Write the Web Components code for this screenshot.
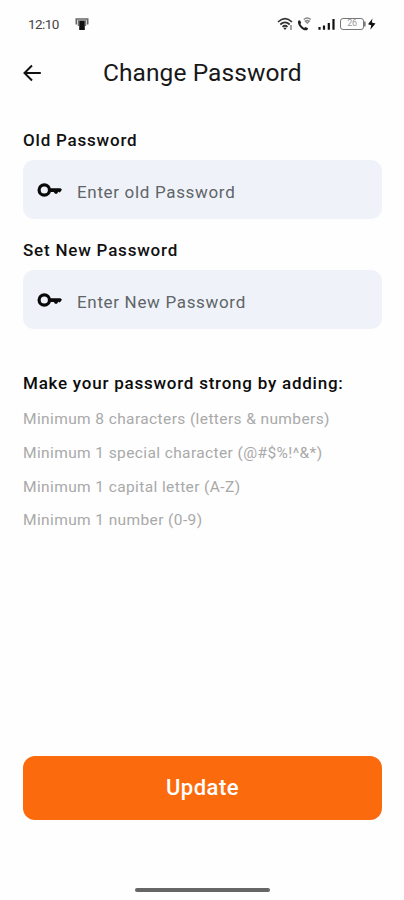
<!DOCTYPE html>
<html lang="en"><head><meta charset="utf-8"><title>Change Password</title>
<style>
body{margin:0;background:#fefefe;font-family:Roboto,"Liberation Sans",sans-serif;color:#111}
</style></head><body>
<password-screen></password-screen>
<script>
const define=(name,html)=>customElements.define(name,class extends HTMLElement{
  constructor(){super();this.attachShadow({mode:'open'}).innerHTML=html;}
});

define('status-bar',`<style>
:host{display:flex;height:48px;box-sizing:border-box;padding:0 28px 0 28px;align-items:center;color:#222}
time{font-size:13.500px;line-height:16px;width:47px;letter-spacing:-.6px;color:#444}
svg{display:block;flex:none}
.gap{flex:1}
.battery{box-sizing:border-box;width:24px;height:12px;border:1.5px solid #777;border-radius:3px;font-size:9px;line-height:9px;text-align:center;color:#999;letter-spacing:-.2px}
</style>
<time>12:10</time>
<svg width="14" height="14" viewBox="0 0 14 14"><path d="M1.300 7.500V2h11.400v5.500" fill="none" stroke="#666" stroke-width="1.600"/><path d="M4.200 3.500h5.600v9.500h-5.600z" fill="#111"/><path d="M3.400 3v6M10.600 3v6" stroke="#777" stroke-width="1.300"/></svg>
<span class="gap"></span>
<svg width="17" height="14" viewBox="0 0 17 14"><g fill="none" stroke="#333" stroke-width="1.700"><path d="M1 5Q8-1.800 15 5M3.300 7.500Q8 3.200 12.700 7.500M5.500 9.800Q8 7.700 10.500 9.800"/></g><path d="M6.300 10.700h3.400L8 13z" fill="#222"/><path d="M14 8v5" stroke="#999" stroke-width="1.800"/></svg>
<svg style="margin-left:4px" width="14" height="14" viewBox="0 0 14 14"><path d="M.3 3.800 2 3.300l1.200 2.500-.8 1.200q1.300 2.600 3.700 3.900l1.300-1 2.800 1.300-.8 1.600q-1 1-3.800.1Q.8 10.300 0 6q-.2-1.500.3-2.200z" fill="#222"/><path d="M5.800 2.500Q9.300-.6 12.800 2.500M7.300 4Q9.300 2.700 11.300 4L9.300 6z" fill="none" stroke="#888" stroke-width="1.300"/></svg>
<svg style="margin:0 5px 0 6px" width="17" height="14" viewBox="0 0 17 14"><path d="M1.500 12.800V10M6 12.800V8.500M10.800 12.800V6M15.500 12.800V2" stroke="#111" stroke-width="2.200"/></svg>
<span class="battery">26</span>
<svg width="12" height="14" viewBox="0 0 12 14"><path d="M.8 4.500v5" stroke="#777" stroke-width="1.600"/><path d="M8.500 1.500 4 7.300l3.200 1-.9 4.500L11.500 6.500 7.800 5.600z" fill="#111"/></svg>`);

define('title-bar',`<style>
:host{display:flex;height:50px;align-items:center;padding:0 23px;color:#181818}
svg{flex:none}
h1{margin:0 0 0 61px;font-size:24.500px;line-height:30px;font-weight:400;letter-spacing:.08px;white-space:nowrap}
</style>
<svg width="19" height="18" viewBox="0 0 19 18"><path d="M17.800 9H1.800M9 1.500 1.500 9 9 16.500" fill="none" stroke="#111" stroke-width="2"/></svg>
<h1><slot></slot></h1>`);

define('key-icon',`<style>:host{display:block;width:26px;height:16px;flex:none}svg{display:block}</style>
<svg width="26" height="16" viewBox="0 0 26 16"><circle cx="7.300" cy="8" r="5.200" fill="none" stroke="#0a0a0a" stroke-width="3.200"/><path d="M12.200 6.200H23.500L25 7.700 22.800 10.600 21.300 9.700 20 11.800H18L16.800 10H12.200z" fill="#0a0a0a"/></svg>`);

customElements.define('password-field',class extends HTMLElement{
  constructor(){super();this.attachShadow({mode:'open'}).innerHTML=`<style>
:host{display:block;height:110px}
label{display:block;height:30px;line-height:20px;font-size:17px;font-weight:500;letter-spacing:.79px;color:#111}
.box{box-sizing:border-box;height:59px;border-radius:11px;background:#eff3f9;display:flex;align-items:center;padding:0 14px}
.hint{margin:5px 0 0 14px;font-size:17px;line-height:22px;letter-spacing:.67px;color:#606468;white-space:nowrap}
</style><label><slot></slot></label><div class="box"><key-icon></key-icon><span class="hint"></span></div>`;}
  connectedCallback(){this.shadowRoot.querySelector('.hint').textContent=this.getAttribute('hint');}
});

define('rule-list',`<style>
:host{display:block}
h2{margin:0 0 9px;font-size:17px;line-height:24px;font-weight:500;letter-spacing:.76px;color:#0c0c0c;white-space:nowrap}
::slotted(p){margin:0;height:33.800px;line-height:30px;font-size:15.500px;letter-spacing:.39px;color:#a9a9a9;white-space:nowrap}
</style><h2><slot name="title"></slot></h2><slot></slot>`);

define('primary-button',`<style>
:host{display:block}
button{display:block;width:100%;height:64px;padding:0;border:0;border-radius:12px;background:#fb6a0c;color:#fff;font:500 22px/64px Roboto,sans-serif;letter-spacing:.5px}
</style><button><slot></slot></button>`);

define('password-screen',`<style>
:host{display:flex;flex-direction:column;width:404px;height:900px;overflow:hidden}
main{flex:1;display:flex;flex-direction:column;padding:32px 22px 0 23px}
rule-list{margin-top:21px}
primary-button{margin-top:auto;margin-bottom:68px}
.home{width:135px;height:4px;border-radius:2px;background:#666;margin:0 0 8px 135px}
</style>
<status-bar></status-bar><title-bar>Change Password</title-bar>
<main>
<password-field hint="Enter old Password">Old Password</password-field>
<password-field hint="Enter New Password">Set New Password</password-field>
<rule-list><span slot="title">Make your password strong by adding:</span>
<p>Minimum 8 characters (letters &amp; numbers)</p><p>Minimum 1 special character (@#$%!^&amp;*)</p><p>Minimum 1 capital letter (A-Z)</p><p>Minimum 1 number (0-9)</p></rule-list>
<primary-button>Update</primary-button>
</main><div class="home"></div>`);
</script></body></html>
